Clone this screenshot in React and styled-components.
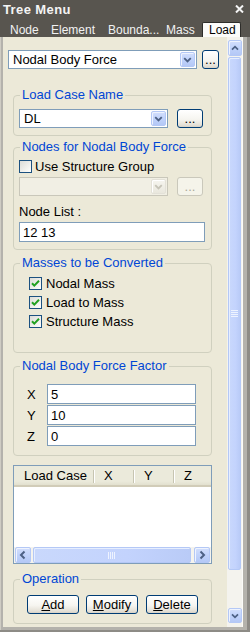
import React from "react";
import styled, { createGlobalStyle } from "styled-components";

const GlobalStyle = createGlobalStyle`
  html, body { margin: 0; padding: 0; background: #fff; }
  body { font-family: "Liberation Sans", Arial, sans-serif; }
  * { box-sizing: border-box; }
`;

const Window = styled.div`
  width: 250px;
  height: 632px;
  display: flex;
  flex-direction: column;
  background: #b4b2ac;
  box-shadow: inset -3px -2px 0 #8d8b86, inset 1px 0 0 #cfccc3;
  overflow: hidden;
`;

const TitleBar = styled.div`
  height: 20px;
  display: flex;
  align-items: center;
  justify-content: space-between;
  padding: 0 6px 2px 3px;
  background: #58554f;
  color: #f4f4f4;
  font-weight: bold;
  font-size: 13px;
  letter-spacing: 0.4px;
`;

const TabRow = styled.div`
  height: 17px;
  display: flex;
  align-items: flex-end;
  padding-left: 3px;
  background: #58554f;
`;

const Tab = styled.div`
  width: ${(p) => p.$w}px;
  height: 15px;
  padding-left: 6px;
  font-size: 12px;
  line-height: 14px;
  color: ${(p) => (p.$active ? "#000" : "#f2f2f2")};
  background: ${(p) => (p.$active ? "#fcfcfa" : "transparent")};
  border: 1px solid ${(p) => (p.$active ? "#2e2d2a" : "transparent")};
  border-bottom: none;
  border-radius: 2px 2px 0 0;
  white-space: nowrap;
`;

const Body = styled.div`
  flex: 1;
  display: flex;
  margin: 0 7px 5px 3px;
  min-height: 0;
`;

const Content = styled.div`
  flex: 1;
  display: flex;
  flex-direction: column;
  background: #ece9d8;
  color: #000;
  font-size: 13px;
`;

const VScroll = styled.div`
  width: 16px;
  display: flex;
  flex-direction: column;
  padding: 3px 1px 4px 1px;
  background: #f4f3ee;
  border-right: 1px solid #fbfbf8;
`;

const ArrowBtn = styled.div`
  width: ${(p) => p.$w || 14}px;
  height: ${(p) => p.$h || 16}px;
  flex: none;
  display: flex;
  align-items: center;
  justify-content: center;
  border: 1px solid #b4c8f6;
  border-radius: 2px;
  background: linear-gradient(180deg, #d2defc 0%, #c1d3fb 50%, #b4c8f6 100%);
  box-shadow: inset 1px 1px 0 #eef3fe;
`;

const Thumb = styled.div`
  flex: none;
  height: ${(p) => p.$h}px;
  width: ${(p) => p.$w || "auto"};
  margin: ${(p) => p.$m || "1px 0 0"};
  display: flex;
  align-items: center;
  justify-content: center;
  border: 1px solid #b4c8f6;
  border-radius: 2px;
  background: linear-gradient(90deg, #c9d8fc 0%, #c3d3fd 60%, #b9cbf7 100%);
  box-shadow: inset 1px 1px 0 #e6eeff;
`;

const Spacer = styled.div`
  flex: 1;
`;

const TopRow = styled.div`
  display: flex;
  align-items: center;
  gap: 5px;
  margin-top: 13px;
  padding-left: 5px;
  height: 19px;
`;

const Group = styled.fieldset`
  margin: ${(p) => p.$mt}px 15px 0 10px;
  padding: ${(p) => p.$pt}px 6px ${(p) => p.$pb}px 5px;
  border: 1px solid #d0d0bf;
  border-radius: 4px;
  min-width: 0;
`;

const Legend = styled.legend`
  margin-left: 1px;
  padding: 0 2px;
  font-size: 13px;
  line-height: 14px;
  color: #0046d5;
`;

const Row = styled.div`
  display: flex;
  align-items: center;
  gap: ${(p) => p.$gap || 0}px;
  height: ${(p) => p.$h || 19}px;
  margin-top: ${(p) => p.$mt || 0}px;
  padding-left: ${(p) => p.$pl || 0}px;
`;

const Select = styled.div`
  width: ${(p) => p.$w}px;
  height: 19px;
  display: flex;
  padding: 1px;
  border: 1px solid ${(p) => (p.$disabled ? "#c9c7ba" : "#7f9db9")};
  background: ${(p) => (p.$disabled ? "#f1efe4" : "#fff")};
`;

const SelectText = styled.span`
  flex: 1;
  padding-left: 3px;
  font-size: 13px;
  line-height: 15px;
  white-space: nowrap;
`;

const DropBtn = styled.span`
  width: 15px;
  display: flex;
  align-items: center;
  justify-content: center;
  border: 1px solid ${(p) => (p.$disabled ? "#e3e1d8" : "#b4c8f6")};
  border-radius: 2px;
  background: ${(p) =>
    p.$disabled
      ? "linear-gradient(180deg, #f6f5ef, #e9e7dd)"
      : "linear-gradient(180deg, #d2defc 0%, #c1d3fb 50%, #b4c8f6 100%)"};
  box-shadow: inset 1px 1px 0 ${(p) => (p.$disabled ? "#fff" : "#eef3fe")};
`;

const Button = styled.button`
  width: ${(p) => p.$w}px;
  height: ${(p) => p.$h || 19}px;
  margin-left: ${(p) => p.$ml || 0}px;
  padding: 0;
  border: 1px solid ${(p) => (p.$disabled ? "#cac8bb" : "#003c74")};
  border-radius: 3px;
  background: ${(p) =>
    p.$disabled
      ? "#f5f4ea"
      : "linear-gradient(180deg, #ffffff 0%, #f6f5f0 55%, #e3dfd5 90%, #d6d0c5 100%)"};
  color: ${(p) => (p.$disabled ? "#aca899" : "#000")};
  font-family: inherit;
  font-size: 13px;
  line-height: 15px;
  flex: none;
`;

const CheckBox = styled.span`
  width: 13px;
  height: 13px;
  flex: none;
  display: flex;
  align-items: center;
  justify-content: center;
  border: 1px solid #1c5180;
  background: linear-gradient(135deg, #dcdcd7 0%, #f4f4f1 70%, #fff 100%);
`;

const Label = styled.span`
  font-size: 13px;
  line-height: 14px;
  white-space: nowrap;
`;

const FieldLabel = styled.div`
  margin-top: 9px;
  padding-left: 0;
  font-size: 13px;
  line-height: 14px;
`;

const TextBox = styled.input`
  display: block;
  width: ${(p) => p.$w}px;
  height: 20px;
  margin-top: ${(p) => p.$mt || 0}px;
  padding: 0 3px;
  border: 1px solid #7f9db9;
  background: #fff;
  font-family: inherit;
  font-size: 13px;
  color: #000;
  outline: none;
`;

const AxisLabel = styled.span`
  width: 28px;
  padding-left: 8px;
  font-size: 13px;
`;

const ListView = styled.div`
  margin: 9px 15px 0 10px;
  height: 99px;
  display: flex;
  flex-direction: column;
  border: 1px solid #7f9db9;
  background: #fff;
`;

const Header = styled.div`
  display: flex;
  height: 21px;
  background: linear-gradient(180deg, #ebeadb 0%, #ebeadb 80%, #e2e0cf 100%);
  border-bottom: 2px solid #d1ccb8;
`;

const HeadCell = styled.div`
  width: ${(p) => p.$w}px;
  padding-left: 10px;
  font-size: 13px;
  line-height: 19px;
  position: relative;
  &::after {
    content: "";
    display: ${(p) => (p.$last ? "none" : "block")};
    position: absolute;
    right: 0;
    top: 4px;
    height: 13px;
    width: 1px;
    background: #c7c5b2;
    box-shadow: 1px 0 0 #fff;
  }
`;

const HScroll = styled.div`
  margin-top: auto;
  height: 16px;
  display: flex;
  align-items: center;
  padding: 0 1px;
  background: #f4f3ee;
`;

const Grip = styled.svg`
  display: block;
`;

const Chevron = ({ dir = "down", color = "#4d6185" }) => {
  const paths = {
    down: "M3.5 5 L7 8.5 L10.5 5",
    up: "M3.5 9 L7 5.5 L10.5 9",
    left: "M8.5 3.5 L5 7 L8.5 10.5",
    right: "M5.5 3.5 L9 7 L5.5 10.5",
  };
  return (
    <svg width="14" height="14" viewBox="0 0 14 14">
      <path d={paths[dir]} fill="none" stroke={color} strokeWidth="2" />
    </svg>
  );
};

const Check = () => (
  <svg width="11" height="11" viewBox="0 0 11 11">
    <path d="M2 5.2 L4.3 7.6 L9 2.8" fill="none" stroke="#21a121" strokeWidth="2" />
  </svg>
);

const CheckRow = ({ label, checked, pl }) => (
  <Row $gap={pl ? 4 : 3} $pl={pl}>
    <CheckBox>{checked && <Check />}</CheckBox>
    <Label>{label}</Label>
  </Row>
);

export default function App() {
  return (
    <>
      <GlobalStyle />
      <Window>
        <TitleBar>
          <span>Tree Menu</span>
          <svg width="9" height="8" viewBox="0 0 9 8">
            <path d="M1 0.5 L8 7.5 M8 0.5 L1 7.5" stroke="#f4f4f4" strokeWidth="2" />
          </svg>
        </TitleBar>
        <TabRow>
          <Tab $w={41}>Node</Tab>
          <Tab $w={57}>Element</Tab>
          <Tab $w={58}>Bounda...</Tab>
          <Tab $w={43}>Mass</Tab>
          <Tab $w={39} $active>
            Load
          </Tab>
        </TabRow>
        <Body>
          <Content>
            <TopRow>
              <Select $w={189}>
                <SelectText>Nodal Body Force</SelectText>
                <DropBtn>
                  <Chevron />
                </DropBtn>
              </Select>
              <Button $w={17} $h={19}>
                ...
              </Button>
            </TopRow>

            <Group $mt={19} $pt={7} $pb={7}>
              <Legend>Load Case Name</Legend>
              <Row $gap={9}>
                <Select $w={149}>
                  <SelectText>DL</SelectText>
                  <DropBtn>
                    <Chevron />
                  </DropBtn>
                </Select>
                <Button $w={26} $h={19}>
                  ...
                </Button>
              </Row>
            </Group>

            <Group $mt={4} $pt={5} $pb={7}>
              <Legend>Nodes for Nodal Body Force</Legend>
              <Row $h={15}>
                <CheckBox />
                <Label style={{ marginLeft: 3 }}>Use Structure Group</Label>
              </Row>
              <Row $gap={9} $mt={3}>
                <Select $w={149} $disabled>
                  <SelectText />
                  <DropBtn $disabled>
                    <Chevron color="#c6c4b8" />
                  </DropBtn>
                </Select>
                <Button $w={26} $h={19} $disabled>
                  ...
                </Button>
              </Row>
              <FieldLabel>Node List :</FieldLabel>
              <TextBox $w={186} $mt={3} defaultValue="12 13" readOnly />
            </Group>

            <Group $mt={6} $pt={4} $pb={21}>
              <Legend>Masses to be Converted</Legend>
              <CheckRow label="Nodal Mass" checked pl={10} />
              <CheckRow label="Load to Mass" checked pl={10} />
              <CheckRow label="Structure Mass" checked pl={10} />
            </Group>

            <Group $mt={6} $pt={11} $pb={9}>
              <Legend>Nodal Body Force Factor</Legend>
              {[
                ["X", "5"],
                ["Y", "10"],
                ["Z", "0"],
              ].map(([axis, val], i) => (
                <Row key={axis} $h={20} $mt={i ? 1 : 0}>
                  <AxisLabel>{axis}</AxisLabel>
                  <TextBox $w={149} defaultValue={val} readOnly />
                </Row>
              ))}
            </Group>

            <ListView>
              <Header>
                <HeadCell $w={80}>Load Case</HeadCell>
                <HeadCell $w={40}>X</HeadCell>
                <HeadCell $w={40}>Y</HeadCell>
                <HeadCell $w={37} $last>
                  Z
                </HeadCell>
              </Header>
              <HScroll>
                <ArrowBtn $w={16} $h={16}>
                  <Chevron dir="left" />
                </ArrowBtn>
                <Thumb $h={16} $w="158px" $m="0 0 0 2px">
                  <Grip width="8" height="7" viewBox="0 0 8 7">
                    <path d="M0.5 0 V7 M2.5 0 V7 M4.5 0 V7 M6.5 0 V7" stroke="#eef3ff" strokeWidth="1" />
                  </Grip>
                </Thumb>
                <Spacer />
                <ArrowBtn $w={16} $h={16}>
                  <Chevron dir="right" />
                </ArrowBtn>
              </HScroll>
            </ListView>

            <Group $mt={8} $pt={9} $pb={9}>
              <Legend>Operation</Legend>
              <Row $pl={8} $gap={7}>
                <Button $w={52}>
                  <u>A</u>dd
                </Button>
                <Button $w={52}>
                  <u>M</u>odify
                </Button>
                <Button $w={52} style={{ marginLeft: 1 }}>
                  <u>D</u>elete
                </Button>
              </Row>
            </Group>
          </Content>
          <VScroll>
            <ArrowBtn>
              <Chevron dir="up" />
            </ArrowBtn>
            <Thumb $h={513}>
              <Grip width="7" height="8" viewBox="0 0 7 8">
                <path d="M0 0.5 H7 M0 2.5 H7 M0 4.5 H7 M0 6.5 H7" stroke="#eef3ff" strokeWidth="1" />
              </Grip>
            </Thumb>
            <Spacer />
            <ArrowBtn $h={15}>
              <Chevron dir="down" />
            </ArrowBtn>
          </VScroll>
        </Body>
      </Window>
    </>
  );
}
